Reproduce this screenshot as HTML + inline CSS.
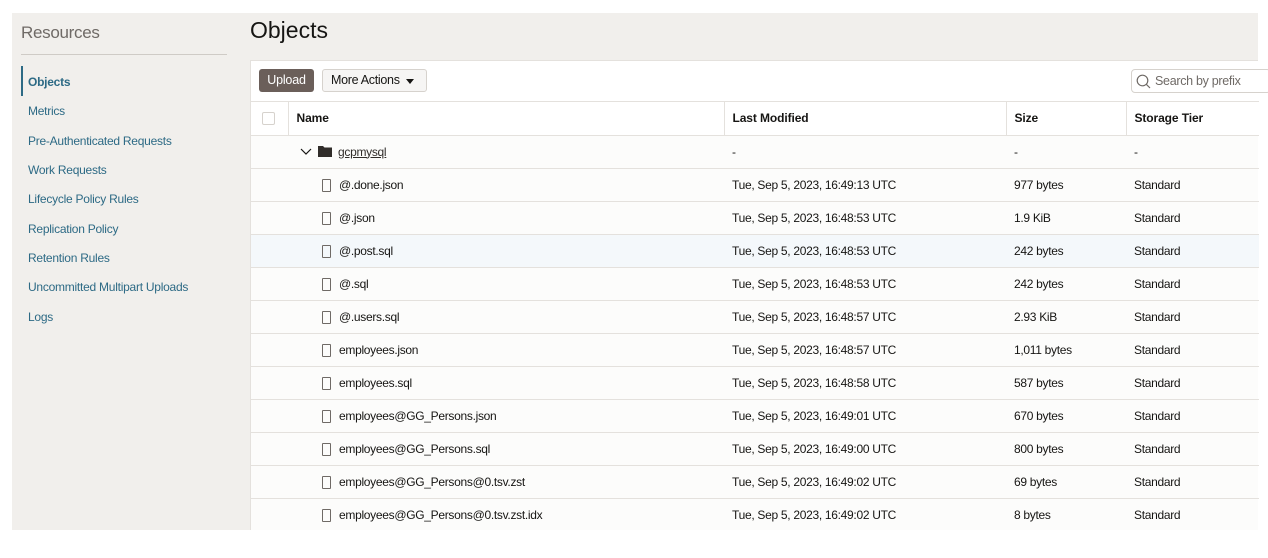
<!DOCTYPE html>
<html><head><meta charset="utf-8"><style>
*{box-sizing:border-box;margin:0;padding:0}
body{width:1268px;height:558px;background:#fff;font-family:"Liberation Sans",Arial,sans-serif;position:relative;overflow:hidden;color:#161513}
#bg{position:absolute;left:12px;top:13px;width:1246px;height:517px;background:#f1efec}
#res{position:absolute;left:21px;top:23px;font-size:17px;color:#6f6a66;letter-spacing:-0.3px}
#div{position:absolute;left:21px;top:54px;width:206px;height:1px;background:#cfcbc6}
.nav{position:absolute;left:28px;font-size:12px;color:#2d6a85;letter-spacing:-0.25px}
#bar{position:absolute;left:21px;top:66px;width:2px;height:30px;background:#2d6a85}
#title{position:absolute;left:250px;top:17px;font-size:23px;color:#161513}
#panel{position:absolute;left:250px;top:60px;width:1008px;height:470px;background:#fcfcfb;border-top:1px solid #e4e1dd;border-left:1px solid #e4e1dd}
#tool{position:absolute;left:0;top:0;width:1008px;height:41px;background:#fff;border-bottom:1px solid #e4e1dd}
#up{position:absolute;left:8px;top:8px;width:55px;height:23px;background:#6b5f5a;color:#fff;font-size:12.5px;border-radius:3px;text-align:center;line-height:23px;letter-spacing:-0.2px}
#ma{position:absolute;left:71px;top:8px;width:105px;height:23px;background:#f6f5f4;border:1px solid #d6d2cd;border-radius:3px;font-size:12.5px;line-height:21px;padding-left:8px;letter-spacing:-0.3px}
#ma:after{content:"";position:absolute;right:12px;top:9px;border-left:4px solid transparent;border-right:4px solid transparent;border-top:5px solid #161513}
#srch{position:absolute;left:880px;top:8px;width:140px;height:24px;background:#fff;border:1px solid #d6d2cd;border-radius:4px;font-size:12.5px;color:#6f6a66;line-height:22px;padding-left:23px;letter-spacing:-0.3px}
table{position:absolute;left:0;top:41px;border-collapse:collapse;width:1008px;font-size:12px;table-layout:fixed}
td,th{height:33px;border-bottom:1px solid #e4e1dd;padding:0 0 0 8px;text-align:left;white-space:nowrap;letter-spacing:-0.3px}
th{background:#fff;font-weight:bold;border-left:1px solid #e4e1dd;letter-spacing:-0.1px}
th:first-child{border-left:none}
tr.hl td{background:#f4f8fb}
.cb{display:inline-block;width:13px;height:13px;border:1px solid #d6d2cd;border-radius:2px;margin-left:3px;vertical-align:middle;background:#fff}
.fi{display:inline-block;width:9px;height:13px;border:1px solid #6f6a66;border-radius:1px;vertical-align:-3px;margin-right:8px;margin-left:26px}
</style></head><body>
<div id="bg"></div>
<div id="res">Resources</div><div id="div"></div>
<div id="bar"></div>
<div class="nav" style="top:75px;font-weight:bold">Objects</div>
<div class="nav" style="top:104px">Metrics</div>
<div class="nav" style="top:134px">Pre-Authenticated Requests</div>
<div class="nav" style="top:163px">Work Requests</div>
<div class="nav" style="top:192px">Lifecycle Policy Rules</div>
<div class="nav" style="top:222px">Replication Policy</div>
<div class="nav" style="top:251px">Retention Rules</div>
<div class="nav" style="top:280px">Uncommitted Multipart Uploads</div>
<div class="nav" style="top:310px">Logs</div>
<div id="title">Objects</div>
<div id="panel">
<div id="tool"><div id="up">Upload</div><div id="ma">More Actions</div>
<div id="srch"><svg style="position:absolute;left:4px;top:4px" width="15" height="15" viewBox="0 0 15 15"><circle cx="6.5" cy="6.5" r="5.3" fill="none" stroke="#6f6a66" stroke-width="1.2"/><path d="M10.3 10.3L14 14" stroke="#6f6a66" stroke-width="1.2"/></svg>Search by prefix</div></div>
<table>
<colgroup><col style="width:37px"><col style="width:436px"><col style="width:282px"><col style="width:120px"><col style="width:133px"></colgroup>
<tr><th><span class="cb"></span></th><th>Name</th><th>Last Modified</th><th>Size</th><th>Storage Tier</th></tr>
<tr><td></td><td><svg width="12" height="8" viewBox="0 0 12 8" style="margin-left:4px;margin-right:6px"><path d="M1 1l5 5 5-5" fill="none" stroke="#161513" stroke-width="1.2"/></svg><svg width="14" height="11" viewBox="0 0 14 11" style="vertical-align:-1px;margin-right:6px"><path d="M0 0h5l1.5 1.5H14V11H0z" fill="#312d2a"/></svg><span style="text-decoration:underline;color:#312d2a">gcpmysql</span></td><td>-</td><td>-</td><td>-</td></tr>
<tr><td></td><td><span class="fi"></span>@.done.json</td><td>Tue, Sep 5, 2023, 16:49:13 UTC</td><td>977 bytes</td><td>Standard</td></tr>
<tr><td></td><td><span class="fi"></span>@.json</td><td>Tue, Sep 5, 2023, 16:48:53 UTC</td><td>1.9 KiB</td><td>Standard</td></tr>
<tr class="hl"><td></td><td><span class="fi"></span>@.post.sql</td><td>Tue, Sep 5, 2023, 16:48:53 UTC</td><td>242 bytes</td><td>Standard</td></tr>
<tr><td></td><td><span class="fi"></span>@.sql</td><td>Tue, Sep 5, 2023, 16:48:53 UTC</td><td>242 bytes</td><td>Standard</td></tr>
<tr><td></td><td><span class="fi"></span>@.users.sql</td><td>Tue, Sep 5, 2023, 16:48:57 UTC</td><td>2.93 KiB</td><td>Standard</td></tr>
<tr><td></td><td><span class="fi"></span>employees.json</td><td>Tue, Sep 5, 2023, 16:48:57 UTC</td><td>1,011 bytes</td><td>Standard</td></tr>
<tr><td></td><td><span class="fi"></span>employees.sql</td><td>Tue, Sep 5, 2023, 16:48:58 UTC</td><td>587 bytes</td><td>Standard</td></tr>
<tr><td></td><td><span class="fi"></span>employees@GG_Persons.json</td><td>Tue, Sep 5, 2023, 16:49:01 UTC</td><td>670 bytes</td><td>Standard</td></tr>
<tr><td></td><td><span class="fi"></span>employees@GG_Persons.sql</td><td>Tue, Sep 5, 2023, 16:49:00 UTC</td><td>800 bytes</td><td>Standard</td></tr>
<tr><td></td><td><span class="fi"></span>employees@GG_Persons@0.tsv.zst</td><td>Tue, Sep 5, 2023, 16:49:02 UTC</td><td>69 bytes</td><td>Standard</td></tr>
<tr><td style="border-bottom:none"></td><td style="border-bottom:none"><span class="fi"></span>employees@GG_Persons@0.tsv.zst.idx</td><td style="border-bottom:none">Tue, Sep 5, 2023, 16:49:02 UTC</td><td style="border-bottom:none">8 bytes</td><td style="border-bottom:none">Standard</td></tr>
</table>
</div>
</body></html>
